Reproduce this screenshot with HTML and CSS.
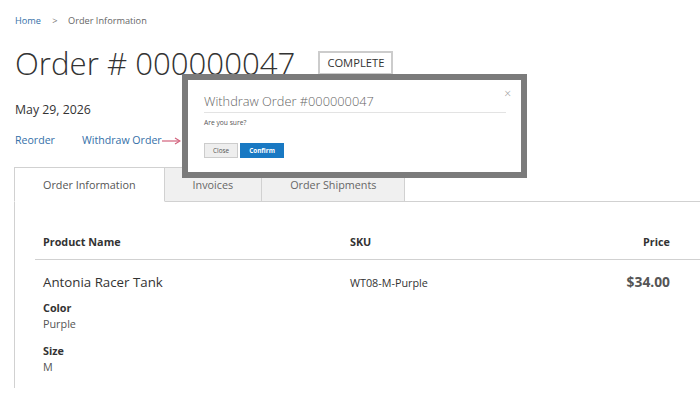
FILE: index.html
```html
<!DOCTYPE html>
<html lang="en">
<head>
  <meta charset="UTF-8" />
  <meta name="viewport" content="width=device-width, initial-scale=1.0"/>
  <title>Order # 000000047</title>
  <link rel="stylesheet" href="styles.css">
</head>
<body>
  <div class="page">
    <div class="breadcrumbs">
      <a href="#">Home</a>
      <span class="sep">&gt;</span>
      <span>Order Information</span>
    </div>

    <div class="title-row">
      <h1>Order # 000000047</h1>
      <span class="order-status">Complete</span>
    </div>

    <div class="order-date">May 29, 2026</div>

    <div class="order-actions">
      <a href="#">Reorder</a>
      <a href="#" class="withdraw">Withdraw Order</a>
      <svg class="arrow" width="19" height="8" viewBox="0 0 19 8">
        <line x1="0" y1="4" x2="17" y2="4" stroke="#d2617c" stroke-width="1.2"/>
        <polyline points="13,1 18,4 13,7" fill="none" stroke="#d2617c" stroke-width="1.2"/>
      </svg>
    </div>

    <!-- Tabs -->
    <div class="tabs">
      <div class="tab active">Order Information</div>
      <div class="tab">Invoices</div>
      <div class="tab">Order Shipments</div>
    </div>

    <div class="tab-content">
      <div class="items-row items-head">
        <div>Product Name</div>
        <div>SKU</div>
        <div class="price">Price</div>
      </div>
      <div class="items-row item">
        <div>
          <div class="product-name">Antonia Racer Tank</div>
          <dl class="options">
            <dt>Color</dt>
            <dd>Purple</dd>
            <dt>Size</dt>
            <dd>M</dd>
          </dl>
        </div>
        <div class="sku">WT08-M-Purple</div>
        <div class="price amount">$34.00</div>
      </div>
    </div>
  </div>

  <!-- Confirm popup -->
  <div class="modal">
    <span class="modal-close">&#215;</span>
    <h2>Withdraw Order #000000047</h2>
    <p>Are you sure?</p>
    <div class="modal-buttons">
      <button class="btn">Close</button>
      <button class="btn primary">Confirm</button>
    </div>
  </div>
</body>
</html>
```

FILE: styles.css
```css
body {
  margin: 0;
  font-family: 'Open Sans', 'Liberation Sans', sans-serif;
  background: #fff;
  color: #333;
  overflow: hidden;
}

a {
  color: #3570a8;
  text-decoration: none;
}

.page {
  padding: 0 0 0 15px;
}

.breadcrumbs {
  padding-top: 14px;
  font-size: 9.2px;
  line-height: 14px;
  color: #666;
}

.breadcrumbs .sep {
  margin: 0 8px 0 9px;
  color: #777;
}

.title-row {
  margin-top: 16px;
  display: flex;
  align-items: center;
  gap: 23px;
}

.title-row h1 {
  margin: 0;
  font-size: 31.2px;
  font-weight: 300;
  line-height: 38px;
  color: #333;
}

.order-status {
  border: 2px solid #ccc;
  padding: 0 7px;
  height: 20px;
  line-height: 20px;
  font-size: 11.2px;
  text-transform: uppercase;
  color: #333;
}

.order-date {
  margin-top: 19px;
  font-size: 12.3px;
  line-height: 18px;
}

.order-actions {
  margin-top: 13px;
  font-size: 10.6px;
  line-height: 16px;
  display: flex;
  align-items: center;
}

.order-actions .withdraw {
  margin-left: 27px;
}

.arrow {
  margin-top: 1px;
}

.tabs {
  margin-top: 19px;
  margin-left: -1px;
  display: flex;
  border-bottom: 1px solid #d1d1d1;
}

.tab {
  font-size: 10.8px;
  line-height: 16px;
  padding: 9px 28px 8px 28px;
  background: #f0f0f0;
  border: 1px solid #d1d1d1;
  border-left: none;
  margin-bottom: -1px;
  color: #666;
}

.tab.active {
  background: #fff;
  border-left: 1px solid #d1d1d1;
  border-bottom-color: #fff;
  color: #555;
}

.tab-content {
  margin-left: -1px;
  border-left: 1px solid #d1d1d1;
  padding: 32px 0 2px 20px;
}

.items-row {
  display: grid;
  grid-template-columns: 307px 1fr auto;
  padding: 0 30px 0 8px;
}

.items-head {
  font-size: 10.8px;
  font-weight: 700;
  line-height: 16px;
  padding-bottom: 9px;
  border-bottom: 1px solid #d1d1d1;
}

.price {
  text-align: right;
}

.item {
  padding-top: 12px;
}

.product-name {
  font-size: 13.3px;
  line-height: 20px;
}

.sku {
  font-size: 10.8px;
  line-height: 22px;
}

.amount {
  font-size: 13.8px;
  font-weight: 700;
  line-height: 20px;
  color: #555;
}

.options {
  margin: 8px 0 0;
  font-size: 10.8px;
  line-height: 16px;
}

.options dt {
  font-weight: 700;
}

.options dd {
  margin: 0 0 11px;
  color: #555;
}

/* popup */
.modal {
  position: absolute;
  left: 182px;
  top: 74px;
  width: 302px;
  height: 92px;
  border: 6px solid #7b7b7b;
  background: #fff;
  padding: 0 15px 0 16px;
}

.modal-close {
  position: absolute;
  right: 10px;
  top: 5px;
  font-size: 12px;
  color: #999;
  font-weight: 300;
}

.modal h2 {
  margin: 13px 0 0;
  font-size: 12.8px;
  font-weight: 300;
  line-height: 16px;
  color: #666;
  padding-bottom: 3px;
  border-bottom: 1px solid #e3e3e3;
}

.modal p {
  margin: 5px 0 0;
  font-size: 6.7px;
  line-height: 10px;
  color: #555;
}

.modal-buttons {
  margin-top: 15px;
  display: flex;
  gap: 2px;
}

.btn {
  font-family: 'Open Sans', 'Liberation Sans', sans-serif;
  font-size: 6.4px;
  height: 15px;
  padding: 0 8px;
  border: 1px solid #ccc;
  background: #eee;
  color: #555;
}

.btn.primary {
  background: #1979c3;
  border-color: #1979c3;
  color: #fff;
  font-weight: 700;
}
```
